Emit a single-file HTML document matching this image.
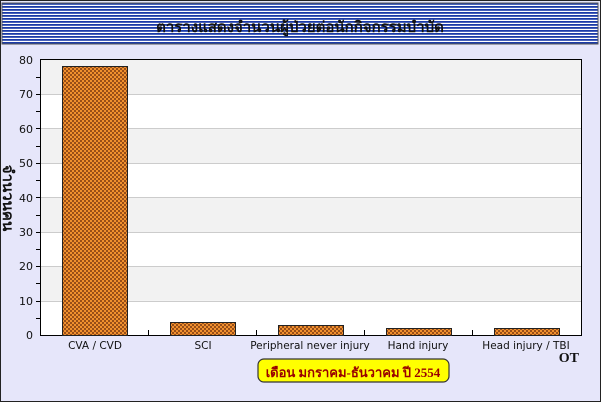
<!DOCTYPE html>
<html><head><meta charset="utf-8"><style>
html,body{margin:0;padding:0;background:#fff;width:603px;height:408px;overflow:hidden}
</style></head><body>
<svg width="603" height="408" xmlns="http://www.w3.org/2000/svg" font-family="'DejaVu Sans','Liberation Sans',sans-serif">
<defs>
<pattern id="h" width="4" height="4" patternUnits="userSpaceOnUse">
<rect width="4" height="4" fill="#f0902e"/>
<rect x="0" y="0" width="2" height="2" fill="#7a3810" opacity="0.75"/>
<rect x="2" y="2" width="2" height="2" fill="#7a3810" opacity="0.75"/>
</pattern>
<pattern id="s" width="4" height="3" patternUnits="userSpaceOnUse">
<rect width="4" height="3" fill="#ffffff"/>
<rect y="0" width="4" height="1.8" fill="#1a3aa8"/>
</pattern>
</defs>
<rect x="0.5" y="0.5" width="600" height="401" fill="#e6e6fa" stroke="#222"/>
<rect x="2" y="3" width="596" height="41" fill="url(#s)" stroke="#555"/>
<text x="300" y="32" text-anchor="middle" font-family="'Liberation Serif','Noto Serif CJK SC',serif" font-weight="bold" font-size="15" fill="#111">ตารางแสดงจำนวนผู้ป่วยต่อนักกิจกรรมบำบัด</text>
<rect x="40" y="60" width="541" height="276" fill="#fff"/>
<g fill="#f2f2f2">
<rect x="40" y="60" width="541" height="34.4"/>
<rect x="40" y="128.8" width="541" height="34.4"/>
<rect x="40" y="197.6" width="541" height="34.4"/>
<rect x="40" y="266.4" width="541" height="34.4"/>
</g>
<g stroke="#ccc" stroke-width="1">
<line x1="40" x2="581" y1="94.5" y2="94.5"/><line x1="40" x2="581" y1="128.5" y2="128.5"/>
<line x1="40" x2="581" y1="163.5" y2="163.5"/><line x1="40" x2="581" y1="197.5" y2="197.5"/>
<line x1="40" x2="581" y1="232.5" y2="232.5"/><line x1="40" x2="581" y1="266.5" y2="266.5"/>
<line x1="40" x2="581" y1="301.5" y2="301.5"/>
</g>
<rect x="40.5" y="59.5" width="541" height="276" fill="none" stroke="#000"/>
<g fill="url(#h)" stroke="#222">
<rect x="62.5" y="66.5" width="65" height="269"/>
<rect x="170.5" y="322.5" width="65" height="13"/>
<rect x="278.5" y="325.5" width="65" height="10"/>
<rect x="386.5" y="328.5" width="65" height="7"/>
<rect x="494.5" y="328.5" width="65" height="7"/>
</g>
<g stroke="#000">
<line x1="36" x2="41" y1="94.5" y2="94.5"/><line x1="36" x2="41" y1="128.5" y2="128.5"/>
<line x1="36" x2="41" y1="163.5" y2="163.5"/><line x1="36" x2="41" y1="197.5" y2="197.5"/>
<line x1="36" x2="41" y1="232.5" y2="232.5"/><line x1="36" x2="41" y1="266.5" y2="266.5"/>
<line x1="36" x2="41" y1="301.5" y2="301.5"/><line x1="36" x2="41" y1="77.5" y2="77.5"/>
<line x1="36" x2="41" y1="111.5" y2="111.5"/><line x1="36" x2="41" y1="146.5" y2="146.5"/>
<line x1="36" x2="41" y1="180.5" y2="180.5"/><line x1="36" x2="41" y1="215.5" y2="215.5"/>
<line x1="36" x2="41" y1="249.5" y2="249.5"/><line x1="36" x2="41" y1="283.5" y2="283.5"/>
<line x1="36" x2="41" y1="318.5" y2="318.5"/>
<line x1="148.5" x2="148.5" y1="330" y2="336"/><line x1="256.5" x2="256.5" y1="330" y2="336"/>
<line x1="364.5" x2="364.5" y1="330" y2="336"/><line x1="472.5" x2="472.5" y1="330" y2="336"/>
</g>
<g font-size="11" fill="#111" text-anchor="end">
<text x="33" y="64">80</text><text x="33" y="98">70</text><text x="33" y="133">60</text>
<text x="33" y="167">50</text><text x="33" y="202">40</text><text x="33" y="236">30</text>
<text x="33" y="270">20</text><text x="33" y="305">10</text><text x="33" y="339">0</text>
</g>
<g font-size="10.5" fill="#111" text-anchor="middle">
<text x="95" y="349">CVA / CVD</text><text x="203" y="349">SCI</text>
<text x="310" y="349">Peripheral never injury</text><text x="418" y="349">Hand injury</text>
<text x="526" y="349">Head injury / TBI</text>
</g>
<text transform="translate(3,198) rotate(90)" text-anchor="middle" font-family="'Liberation Serif','Noto Serif CJK SC',serif" font-weight="bold" font-size="15" fill="#111">จำนวนคน</text>
<text x="579" y="362" text-anchor="end" font-family="'Liberation Serif',serif" font-weight="bold" font-size="14" fill="#111">OT</text>
<rect x="258" y="359" width="191" height="23" rx="6" fill="#ffff00" stroke="#333" stroke-width="1.2"/>
<text x="353" y="377" text-anchor="middle" font-family="'Liberation Serif','Noto Serif CJK SC',serif" font-weight="bold" font-size="13" fill="#990000">เดือน มกราคม-ธันวาคม  ปี 2554</text>
</svg>
</body></html>
